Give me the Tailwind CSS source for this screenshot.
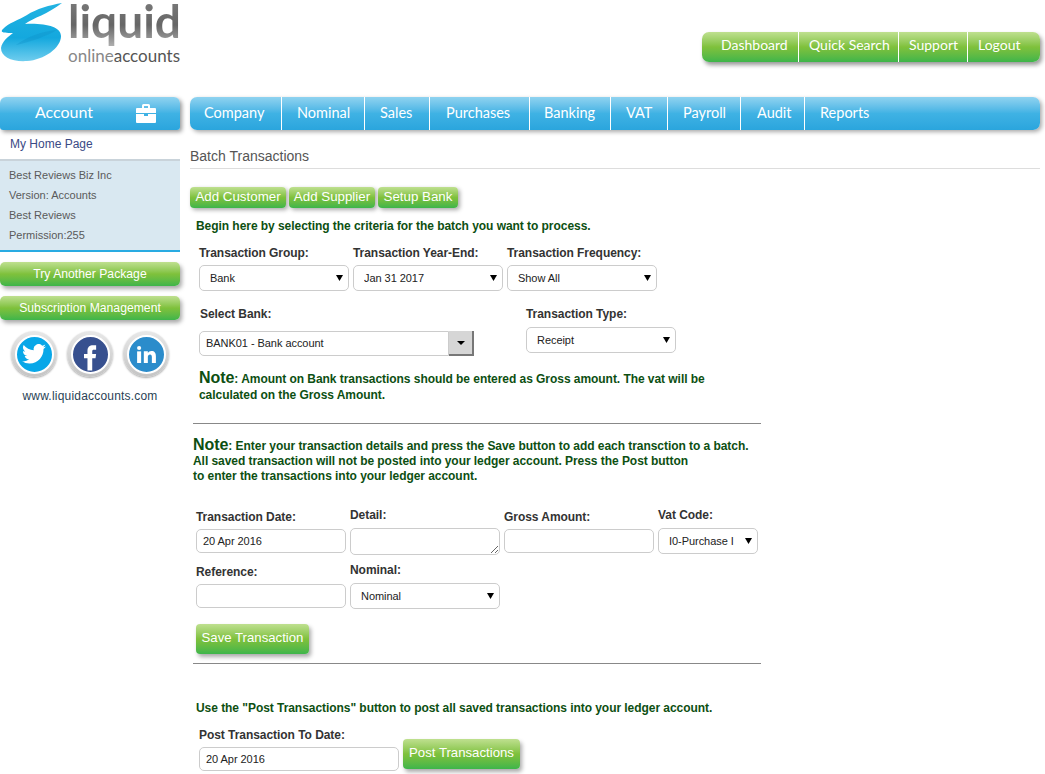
<!DOCTYPE html>
<html lang="en">
<head>
  <meta charset="UTF-8">
  <title>Batch Transactions</title>
  <script src="https://cdn.jsdelivr.net/npm/@tailwindcss/browser@4"></script>
</head>
<body class="bg-white font-['Liberation_Sans',Arial,sans-serif] text-[12px] text-[#333] overflow-hidden">
  <div class="w-[1045px] h-[774px] overflow-hidden">

    <!-- header -->
    <header class="h-[97px] flex justify-between">
      <div class="flex">
        <svg class="w-[68px] h-[64px]" viewBox="0 0 68 64">
          <defs>
            <linearGradient id="blob" x1="0" y1="0" x2="0" y2="1">
              <stop offset="0" stop-color="#22b3e2"/>
              <stop offset="0.6" stop-color="#14a8de"/>
              <stop offset="1" stop-color="#6fcdee"/>
            </linearGradient>
          </defs>
          <path d="M62 3 C50 5 36 9 27 15 C19 20 8 23 3 29 C-1 33 5 33 13 33 C9 36 2 41 1 48 C1 57 12 62 27 61 C44 60 61 48 61 36 C61 27 46 23 25 24 C33 18 48 14 62 3 Z" fill="url(#blob)"/>
          <path d="M16 45 C28 36 44 31 57 30 C47 36 30 42 16 45 Z" fill="#0c8cc4" opacity="0.3"/>
        </svg>
        <div class="w-[120px]">
          <div class="h-[50px] text-[46px] leading-[41px] font-['Lato',sans-serif] font-bold whitespace-nowrap text-transparent bg-clip-text bg-gradient-to-b from-[#7a7a7a] via-[#666] to-[#bdbdbd]">liquid</div>
          <div class="mt-[-2px] text-[17px] leading-[16px] font-['Lato',sans-serif] text-[#555] whitespace-nowrap"><span class="text-[#888]">online</span>accounts</div>
        </div>
      </div>
      <nav class="mt-[32px] mr-[5px] h-[30px] w-[338px] flex rounded-[7px] shadow-[2px_3px_4px_#999] bg-gradient-to-b from-[#bfe08f] via-[#7fc13b] to-[#3cb54a] text-white text-[14px] leading-[26px] font-['Lato',sans-serif]">
        <a class="w-[97px] pl-[19px] border-r border-white">Dashboard</a>
        <a class="w-[100px] pl-[10px] border-r border-white whitespace-nowrap">Quick Search</a>
        <a class="w-[69px] pl-[10px] border-r border-white">Support</a>
        <a class="flex-1 pl-[10px]">Logout</a>
      </nav>
    </header>

    <div class="flex">
      <!-- sidebar -->
      <aside class="w-[180px] shrink-0">
        <div class="h-[33px] flex rounded-t-[6px] rounded-b-[3px] shadow-[2px_2px_4px_#999] bg-gradient-to-b from-[#8fd3f0] via-[#3fb2e4] to-[#2aa5dd] text-white text-[16px] font-['Lato',sans-serif]">
          <div class="w-[128px] text-center leading-[30px]">Account</div>
          <div class="flex-1 flex items-center pl-[8px]">
            <svg class="w-[20px] h-[19px]" viewBox="0 0 20 19" fill="#fff"><path d="M6 4V1.500Q6 0 7.500 0h5Q14 0 14 1.500V4h-2V2H8v2Z"/><path d="M1 4h18q1 0 1 1v4H0V5q0-1 1-1Z"/><path d="M0 10h8v2h4v-2h8v8q0 1-1 1H1q-1 0-1-1Z"/></svg>
          </div>
        </div>
        <a class="block h-[29px] pl-[10px] pt-[7px] text-[#3a4a85] leading-[15px]">My Home Page</a>
        <div class="h-[93px] border-t-2 border-b-2 border-t-[#c9d3da] border-b-[#29abe2] bg-[#d9e8f1] pt-[4px] pl-[9px] text-[11px] text-[#5a5a5a] leading-[20px]">
          <div>Best Reviews Biz Inc</div>
          <div>Version: Accounts</div>
          <div>Best Reviews</div>
          <div>Permission:255</div>
        </div>
        <a class="mt-[10px] block h-[24px] rounded-[5px] text-center text-[12.2px] text-white leading-[24px] shadow-[2px_3px_4px_#aaa] bg-gradient-to-b from-[#bfe08f] via-[#7fc13b] to-[#3cb54a]">Try Another Package</a>
        <a class="mt-[10px] block h-[24px] rounded-[5px] text-center text-[12.2px] text-white leading-[24px] shadow-[2px_3px_4px_#aaa] bg-gradient-to-b from-[#bfe08f] via-[#7fc13b] to-[#3cb54a]">Subscription Management</a>
        <div class="mt-[11px] flex gap-[10px] pl-[11px]">
          <div class="w-[46px] h-[46px] rounded-full bg-gradient-to-b from-[#e8e8e8] to-[#c4c4c4] shadow-[0_1px_2px_#aaa] flex items-center justify-center">
            <div class="w-[39px] h-[39px] rounded-full border-2 border-white bg-[#08a7e8] flex items-center justify-center">
              <svg class="w-[24px] h-[20px]" viewBox="0 0 24 20" fill="#fff"><path d="M24 2.400a9.800 9.800 0 0 1-2.800.8A4.900 4.900 0 0 0 23.300.5a9.800 9.800 0 0 1-3.100 1.200 4.900 4.900 0 0 0-8.400 4.500A14 14 0 0 1 1.700.9a4.900 4.900 0 0 0 1.500 6.600 4.900 4.900 0 0 1-2.200-.6 4.900 4.900 0 0 0 3.900 4.900 4.900 4.900 0 0 1-2.200.1 4.900 4.900 0 0 0 4.600 3.400A9.900 9.900 0 0 1 0 17.300 14 14 0 0 0 7.500 19.500c9 0 14-7.500 14-14v-.6A10 10 0 0 0 24 2.400Z"/></svg>
            </div>
          </div>
          <div class="w-[46px] h-[46px] rounded-full bg-gradient-to-b from-[#e8e8e8] to-[#c4c4c4] shadow-[0_1px_2px_#aaa] flex items-center justify-center">
            <div class="w-[39px] h-[39px] rounded-full border-2 border-white bg-[#37508f] flex items-end justify-center overflow-hidden">
              <svg class="w-[13px] h-[27px] mb-[1px]" viewBox="0 0 15 30" fill="#fff"><path d="M4 30V16H0v-5h4V7.500C4 3 6.500 1 10.500 1H14v5h-2.500C9.800 6 9.500 6.800 9.500 8v3H14l-.7 5H9.500v14Z"/></svg>
            </div>
          </div>
          <div class="w-[46px] h-[46px] rounded-full bg-gradient-to-b from-[#e8e8e8] to-[#c4c4c4] shadow-[0_1px_2px_#aaa] flex items-center justify-center">
            <div class="w-[39px] h-[39px] rounded-full border-2 border-white bg-[#2b8ccb] flex items-center justify-center">
              <svg class="w-[19px] h-[17px]" viewBox="0 0 21 19" fill="#fff"><rect x="0" y="6" width="4.500" height="13"/><circle cx="2.250" cy="2.300" r="2.300"/><path d="M7.500 6H12v1.800C12.800 6.600 14.200 5.700 16 5.700c3.600 0 5 2.300 5 5.800V19h-4.500v-6.800c0-1.700-.6-2.700-2-2.700-1.500 0-2.500 1-2.500 2.700V19H7.500Z"/></svg>
            </div>
          </div>
        </div>
        <div class="mt-[12px] text-center tracking-[0.2px] leading-[15px] text-[#2a3f55]">www.liquidaccounts.com</div>
      </aside>

      <!-- main -->
      <main class="ml-[10px] w-[850px] font-bold tracking-[-0.05px] leading-[14px]">
        <nav class="h-[33px] flex rounded-[7px] shadow-[2px_2px_4px_#aaa] bg-gradient-to-b from-[#8fd3f0] via-[#3fb2e4] to-[#2aa5dd] text-white text-[14.5px] tracking-normal font-normal font-['Lato',sans-serif] leading-[31px]">
          <a class="w-[92px] pl-[14px] border-r border-white">Company</a>
          <a class="w-[83px] pl-[15px] border-r border-white">Nominal</a>
          <a class="w-[65px] pl-[15px] border-r border-white">Sales</a>
          <a class="w-[100px] pl-[16px] border-r border-white">Purchases</a>
          <a class="w-[81px] pl-[14px] border-r border-white">Banking</a>
          <a class="w-[57px] pl-[15px] border-r border-white">VAT</a>
          <a class="w-[73px] pl-[15px] border-r border-white">Payroll</a>
          <a class="w-[64px] pl-[16px] border-r border-white">Audit</a>
          <a class="flex-1 pl-[15px]">Reports</a>
        </nav>

        <h1 class="mt-[18px] h-[20px] font-normal text-[14px] leading-[16px] tracking-normal text-[#555] border-b border-[#ddd] box-content">Batch Transactions</h1>

        <div class="mt-[18px] flex gap-[3px] font-normal text-[13.33px] tracking-normal text-white leading-[20px]">
          <a class="w-[96px] h-[21px] text-center rounded-[4px] shadow-[2px_2px_4px_#aaa] bg-gradient-to-b from-[#bfe08f] via-[#7fc13b] to-[#3cb54a]">Add Customer</a>
          <a class="w-[86px] h-[21px] text-center rounded-[4px] shadow-[2px_2px_4px_#aaa] bg-gradient-to-b from-[#bfe08f] via-[#7fc13b] to-[#3cb54a]">Add Supplier</a>
          <a class="w-[80px] h-[21px] text-center rounded-[4px] shadow-[2px_2px_4px_#aaa] bg-gradient-to-b from-[#bfe08f] via-[#7fc13b] to-[#3cb54a]">Setup Bank</a>
        </div>

        <p class="mt-[11px] ml-[6px] text-[#0d4f12]">Begin here by selecting the criteria for the batch you want to process.</p>

        <div class="mt-[13px] ml-[9px] flex gap-[4px]">
          <label class="w-[150px]">Transaction Group:
            <span class="relative mt-[5px] block">
              <select class="block appearance-none w-full h-[26px] pl-[10px] border border-[#ccc] rounded-[5px] bg-white text-[11px] font-normal text-[#222]"><option>Bank</option></select>
              <svg class="absolute right-[6px] top-[10px] w-[7px] h-[6px]" viewBox="0 0 7 6"><path d="M0 0h7L3.500 6Z"/></svg>
            </span>
          </label>
          <label class="w-[150px]">Transaction Year-End:
            <span class="relative mt-[5px] block">
              <select class="block appearance-none w-full h-[26px] pl-[10px] border border-[#ccc] rounded-[5px] bg-white text-[11px] font-normal text-[#222]"><option>Jan 31 2017</option></select>
              <svg class="absolute right-[6px] top-[10px] w-[7px] h-[6px]" viewBox="0 0 7 6"><path d="M0 0h7L3.500 6Z"/></svg>
            </span>
          </label>
          <label class="w-[150px]">Transaction Frequency:
            <span class="relative mt-[5px] block">
              <select class="block appearance-none w-full h-[26px] pl-[10px] border border-[#ccc] rounded-[5px] bg-white text-[11px] font-normal text-[#222]"><option>Show All</option></select>
              <svg class="absolute right-[6px] top-[10px] w-[7px] h-[6px]" viewBox="0 0 7 6"><path d="M0 0h7L3.500 6Z"/></svg>
            </span>
          </label>
        </div>

        <div class="mt-[16px] ml-[9px] flex">
          <label class="w-[327px] block">
            <span class="ml-[1px]">Select Bank:</span>
            <span class="mt-[10px] flex w-[275px]">
              <input class="w-[250px] h-[25px] pl-[6px] pb-[1px] border border-[#ccc] rounded-l-[5px] text-[11px] font-normal text-[#222]" value="BANK01 - Bank account">
              <span class="w-[25px] h-[25px] bg-[#d6d6d6] border-r-2 border-b-2 border-[#777] flex items-center justify-center">
                <svg class="w-[8px] h-[4px]" viewBox="0 0 8 4"><path d="M0 0h8L4 4Z"/></svg>
              </span>
            </span>
          </label>
          <label class="w-[150px]">Transaction Type:
            <span class="relative mt-[6px] block">
              <select class="block appearance-none w-full h-[26px] pl-[10px] border border-[#ccc] rounded-[5px] bg-white text-[11px] font-normal text-[#222]"><option>Receipt</option></select>
              <svg class="absolute right-[6px] top-[10px] w-[7px] h-[6px]" viewBox="0 0 7 6"><path d="M0 0h7L3.500 6Z"/></svg>
            </span>
          </label>
        </div>

        <p class="mt-[14px] ml-[9px] w-[540px] leading-[16px] text-[#0d4f12]"><span class="text-[16px]">Note</span>: Amount on Bank transactions should be entered as Gross amount. The vat will be calculated on the Gross Amount.</p>

        <hr class="mt-[20px] ml-[3px] w-[568px] border-t border-[#888]">

        <p class="mt-[13px] ml-[3px] w-[568px] leading-[15px] text-[#0d4f12]"><span class="text-[16px]">Note</span>: Enter your transaction details and press the Save button to add each transction to a batch.<br>All saved transaction will not be posted into your ledger account. Press the Post button<br>to enter the transactions into your ledger account.</p>

        <div class="mt-[24px] ml-[6px] flex gap-[4px] items-start">
          <label class="w-[150px] pt-[2px]">Transaction Date:
            <input class="mt-[5px] block w-full h-[24px] pl-[6px] border border-[#ccc] rounded-[5px] text-[11px] font-normal text-[#222]" value="20 Apr 2016">
          </label>
          <label class="w-[150px]">Detail:
            <textarea class="mt-[6px] block w-full h-[27px] border border-[#ccc] rounded-[5px]"></textarea>
          </label>
          <label class="w-[150px] pt-[2px]">Gross Amount:
            <input class="mt-[5px] block w-full h-[24px] border border-[#ccc] rounded-[5px]">
          </label>
          <label class="w-[100px]">Vat Code:
            <span class="relative mt-[6px] block">
              <select class="block appearance-none w-full h-[26px] pl-[10px] border border-[#ccc] rounded-[5px] bg-white text-[11px] font-normal text-[#222]"><option>I0-Purchase I</option></select>
              <svg class="absolute right-[6px] top-[10px] w-[7px] h-[6px]" viewBox="0 0 7 6"><path d="M0 0h7L3.500 6Z"/></svg>
            </span>
          </label>
        </div>

        <div class="mt-[8px] ml-[6px] flex gap-[4px] items-start">
          <label class="w-[150px] pt-[2px]">Reference:
            <input class="mt-[5px] block w-full h-[24px] border border-[#ccc] rounded-[5px]">
          </label>
          <label class="w-[150px]">Nominal:
            <span class="relative mt-[6px] block">
              <select class="block appearance-none w-full h-[26px] pl-[10px] border border-[#ccc] rounded-[5px] bg-white text-[11px] font-normal text-[#222]"><option>Nominal</option></select>
              <svg class="absolute right-[6px] top-[10px] w-[7px] h-[6px]" viewBox="0 0 7 6"><path d="M0 0h7L3.500 6Z"/></svg>
            </span>
          </label>
        </div>

        <a class="mt-[15px] ml-[6px] block w-[113px] h-[30px] rounded-[4px] text-center font-normal text-[13.2px] tracking-normal text-white leading-[28px] shadow-[2px_3px_4px_#aaa] bg-gradient-to-b from-[#bfe08f] via-[#7fc13b] to-[#3cb54a]">Save Transaction</a>

        <hr class="mt-[9px] ml-[3px] w-[568px] border-t border-[#888]">

        <p class="mt-[37px] ml-[6px] text-[#0d4f12]">Use the "Post Transactions" button to post all saved transactions into your ledger account.</p>

        <div class="mt-[13px] ml-[9px] flex gap-[4px] items-start">
          <label class="w-[200px]">Post Transaction To Date:
            <input class="mt-[5px] block w-full h-[24px] pl-[6px] border border-[#ccc] rounded-[5px] text-[11px] font-normal text-[#222]" value="20 Apr 2016">
          </label>
          <a class="mt-[11px] w-[117px] h-[30px] rounded-[4px] text-center font-normal text-[13.2px] tracking-normal text-white leading-[28px] shadow-[2px_3px_4px_#aaa] bg-gradient-to-b from-[#bfe08f] via-[#7fc13b] to-[#3cb54a]">Post Transactions</a>
        </div>
      </main>
    </div>
  </div>
</body>
</html>
